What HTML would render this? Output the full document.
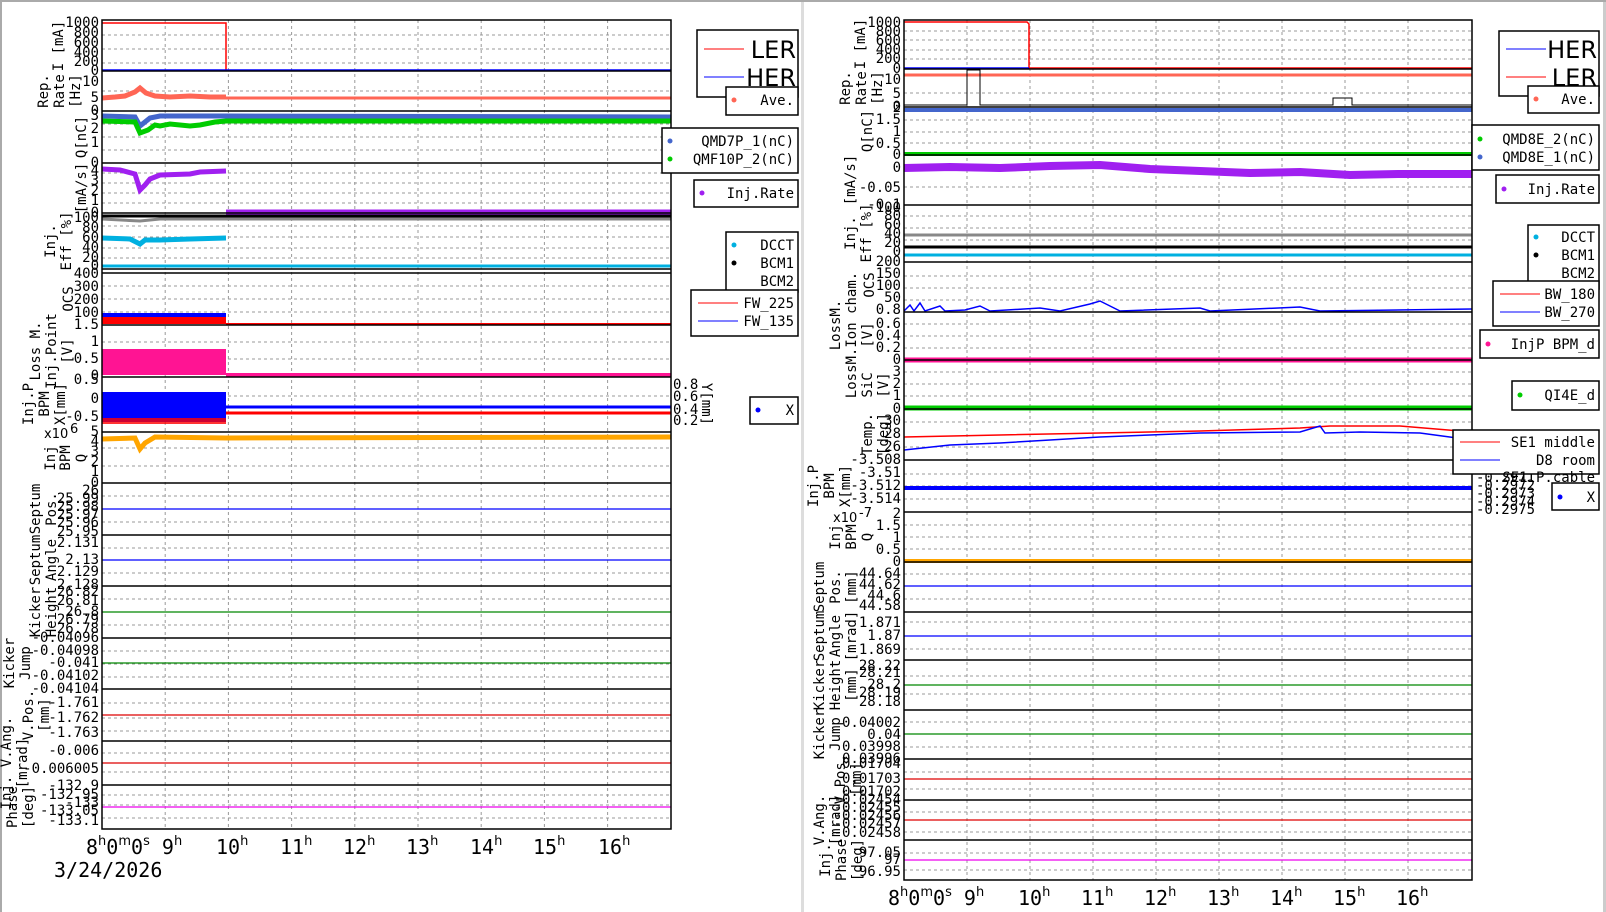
<!DOCTYPE html>
<html><head><meta charset="utf-8"><style>
html,body{margin:0;padding:0;background:#fff;width:1606px;height:912px;overflow:hidden}
svg{display:block}
text{font-family:"DejaVu Sans Mono","Liberation Mono",monospace;fill:#000}
.t{font-size:14px;text-anchor:end}
.a{font-size:14px;text-anchor:middle}
.h{font-family:"DejaVu Sans","Liberation Sans",sans-serif;font-size:20px}
.hs{font-family:"DejaVu Sans","Liberation Sans",sans-serif;font-size:13px}
.lg{font-size:14px;text-anchor:end}
.big{font-family:"DejaVu Sans","Liberation Sans",sans-serif;font-size:24px;text-anchor:end}
.g{stroke:#999;stroke-width:1;stroke-dasharray:3,3}
.b{stroke:#000;stroke-width:1.5;fill:none}
</style></head><body>
<svg width="1606" height="912" viewBox="0 0 1606 912" xmlns="http://www.w3.org/2000/svg">
<rect x="0" y="0" width="1606" height="2" fill="#aaa"/>
<rect x="0" y="0" width="2" height="912" fill="#aaa"/>
<rect x="801" y="2" width="3" height="910" fill="#ddd"/>
<rect x="1603" y="2" width="3" height="910" fill="#ccc"/>

<!-- ============ LEFT PLOT ============ -->
<g>
<!-- vertical grid -->
<g class="g">
<line x1="165.2" y1="20" x2="165.2" y2="829"/><line x1="228.4" y1="20" x2="228.4" y2="829"/><line x1="291.6" y1="20" x2="291.6" y2="829"/><line x1="354.8" y1="20" x2="354.8" y2="829"/><line x1="418" y1="20" x2="418" y2="829"/><line x1="481.2" y1="20" x2="481.2" y2="829"/><line x1="544.4" y1="20" x2="544.4" y2="829"/><line x1="607.6" y1="20" x2="607.6" y2="829"/>
</g>
<!-- horizontal grid -->
<g class="g">
<line x1="102" x2="671" y1="35" y2="35"/><line x1="102" x2="671" y1="49" y2="49"/><line x1="102" x2="671" y1="63" y2="63"/>
<line x1="102" x2="671" y1="91" y2="91"/>
<line x1="102" x2="671" y1="124" y2="124"/><line x1="102" x2="671" y1="137" y2="137"/><line x1="102" x2="671" y1="150" y2="150"/>
<line x1="102" x2="671" y1="173" y2="173"/><line x1="102" x2="671" y1="183" y2="183"/><line x1="102" x2="671" y1="193" y2="193"/><line x1="102" x2="671" y1="203" y2="203"/>
<line x1="102" x2="671" y1="226" y2="226"/><line x1="102" x2="671" y1="237" y2="237"/><line x1="102" x2="671" y1="248" y2="248"/><line x1="102" x2="671" y1="258" y2="258"/>
<line x1="102" x2="671" y1="286" y2="286"/><line x1="102" x2="671" y1="299" y2="299"/><line x1="102" x2="671" y1="312" y2="312"/>
<line x1="102" x2="671" y1="342" y2="342"/><line x1="102" x2="671" y1="359" y2="359"/>
<line x1="102" x2="671" y1="396" y2="396"/><line x1="102" x2="671" y1="414" y2="414"/>
<line x1="102" x2="671" y1="448" y2="448"/><line x1="102" x2="671" y1="466" y2="466"/>
<line x1="102" x2="671" y1="496" y2="496"/><line x1="102" x2="671" y1="509" y2="509"/><line x1="102" x2="671" y1="522" y2="522"/>
<line x1="102" x2="671" y1="548" y2="548"/><line x1="102" x2="671" y1="560" y2="560"/><line x1="102" x2="671" y1="573" y2="573"/>
<line x1="102" x2="671" y1="599" y2="599"/><line x1="102" x2="671" y1="612" y2="612"/><line x1="102" x2="671" y1="625" y2="625"/>
<line x1="102" x2="671" y1="651" y2="651"/><line x1="102" x2="671" y1="664" y2="664"/><line x1="102" x2="671" y1="677" y2="677"/>
<line x1="102" x2="671" y1="703" y2="703"/><line x1="102" x2="671" y1="718" y2="718"/><line x1="102" x2="671" y1="731" y2="731"/>
<line x1="102" x2="671" y1="753" y2="753"/><line x1="102" x2="671" y1="772" y2="772"/>
<line x1="102" x2="671" y1="795" y2="795"/><line x1="102" x2="671" y1="805" y2="805"/><line x1="102" x2="671" y1="818" y2="818"/>
</g>
<!-- data -->
<polyline points="102,23 226,23 226,71" fill="none" stroke="#f00" stroke-width="1.5"/>
<line x1="102" y1="70" x2="671" y2="70" stroke="#00f" stroke-width="1.5"/>
<!-- rep rate -->
<polyline points="102,98 115,97 125,96 135,92 140,88 146,93 155,96 170,97 190,96 210,97 226,97" fill="none" stroke="#f65" stroke-width="5"/>
<line x1="226" y1="98" x2="671" y2="98" stroke="#f65" stroke-width="3"/>
<!-- Q -->
<polyline points="102,116 135,117 140,126 150,118 160,116 226,116 671,117" fill="none" stroke="#4466cc" stroke-width="5"/>
<polyline points="102,121 135,122 140,133 148,130 155,125 160,126 170,124 190,126 200,125 215,122 226,121 671,121" fill="none" stroke="#0c0" stroke-width="5"/>
<!-- Inj rate -->
<polyline points="102,169 120,170 135,174 140,190 145,185 150,179 160,175 190,174 200,172 226,171" fill="none" stroke="#a020f0" stroke-width="5"/>
<line x1="226" y1="212" x2="671" y2="212" stroke="#a020f0" stroke-width="5"/>
<!-- Eff -->
<line x1="102" y1="216" x2="671" y2="216" stroke="#000" stroke-width="3"/>
<polyline points="102,219 140,221 160,219 226,219 671,219" fill="none" stroke="#888" stroke-width="3"/>
<polyline points="102,238 130,239 140,244 145,240 160,240 190,239 226,238" fill="none" stroke="#00b0e0" stroke-width="5"/>
<line x1="102" y1="266" x2="671" y2="266" stroke="#00b0e0" stroke-width="3"/>
<!-- OCS -->
<rect x="102" y="313" width="124" height="4" fill="#00f"/>
<rect x="102" y="317" width="124" height="7" fill="#f00"/>
<line x1="226" y1="324" x2="671" y2="324" stroke="#f00" stroke-width="2"/>
<line x1="226" y1="325" x2="671" y2="325" stroke="#00f" stroke-width="1"/>
<!-- Loss -->
<rect x="102" y="349" width="124" height="26" fill="#ff1493"/>
<line x1="226" y1="375" x2="671" y2="375" stroke="#ff1493" stroke-width="4"/>
<!-- BPM -->
<rect x="102" y="392" width="124" height="30" fill="#00f"/>
<rect x="102" y="418" width="124" height="6" fill="#f00" opacity=".8"/>
<line x1="226" y1="407" x2="671" y2="407" stroke="#00f" stroke-width="3"/>
<line x1="226" y1="413" x2="671" y2="413" stroke="#f00" stroke-width="3"/>
<!-- Q BPM -->
<polyline points="102,439 135,438 140,449 145,443 155,437 226,438 671,437" fill="none" stroke="#ffa500" stroke-width="5"/>
<line x1="102" y1="509" x2="671" y2="509" stroke="#00f" stroke-width="1.2"/>
<line x1="102" y1="560" x2="671" y2="560" stroke="#00f" stroke-width="1.2"/>
<line x1="102" y1="612" x2="671" y2="612" stroke="#080" stroke-width="1.2"/>
<line x1="102" y1="663" x2="671" y2="663" stroke="#080" stroke-width="1.2"/>
<line x1="102" y1="715" x2="671" y2="715" stroke="#d00" stroke-width="1.2"/>
<line x1="102" y1="763" x2="671" y2="763" stroke="#d00" stroke-width="1.2"/>
<line x1="102" y1="807" x2="671" y2="807" stroke="#e0e" stroke-width="1.2"/>
<!-- frames -->
<g class="b">
<rect x="102" y="20" width="569" height="809"/>
<line x1="102" x2="671" y1="71" y2="71"/><line x1="102" x2="671" y1="111" y2="111"/><line x1="102" x2="671" y1="163" y2="163"/><line x1="102" x2="671" y1="213" y2="213"/><line x1="102" x2="671" y1="269" y2="269"/><line x1="102" x2="671" y1="273" y2="273"/><line x1="102" x2="671" y1="325" y2="325"/><line x1="102" x2="671" y1="377" y2="377"/><line x1="102" x2="671" y1="432" y2="432"/><line x1="102" x2="671" y1="483" y2="483"/><line x1="102" x2="671" y1="535" y2="535"/><line x1="102" x2="671" y1="586" y2="586"/><line x1="102" x2="671" y1="638" y2="638"/><line x1="102" x2="671" y1="689" y2="689"/><line x1="102" x2="671" y1="741" y2="741"/><line x1="102" x2="671" y1="785" y2="785"/>
</g>
<!-- tick labels -->
<g class="t">
<text x="99" y="27">1000</text><text x="99" y="37">800</text><text x="99" y="47">600</text><text x="99" y="57">400</text><text x="99" y="66">200</text><text x="99" y="75">0</text>
<text x="99" y="86">10</text><text x="99" y="102">5</text><text x="99" y="115">0</text>
<text x="99" y="120">3</text><text x="99" y="133">2</text><text x="99" y="147">1</text><text x="99" y="167">0</text>
<text x="99" y="175">4</text><text x="99" y="185">3</text><text x="99" y="195">2</text><text x="99" y="205">1</text><text x="99" y="217">0</text>
<text x="99" y="222">100</text><text x="99" y="232">80</text><text x="99" y="242">60</text><text x="99" y="252">40</text><text x="99" y="262">20</text><text x="99" y="270">0</text>
<text x="99" y="278">400</text><text x="99" y="291">300</text><text x="99" y="304">200</text><text x="99" y="317">100</text>
<text x="99" y="329">1.5</text><text x="99" y="346">1</text><text x="99" y="363">0.5</text><text x="99" y="380">0</text>
<text x="99" y="384">0.5</text><text x="99" y="403">0</text><text x="99" y="421">-0.5</text>
<text x="99" y="436">5</text><text x="99" y="446">4</text><text x="99" y="456">3</text><text x="99" y="466">2</text><text x="99" y="476">1</text><text x="99" y="487">0</text>
<text x="99" y="495">26</text><text x="99" y="503">25.99</text><text x="99" y="511">25.98</text><text x="99" y="519">25.97</text><text x="99" y="527">25.96</text><text x="99" y="536">25.95</text>
<text x="99" y="547">2.131</text><text x="99" y="564">2.13</text><text x="99" y="576">2.129</text><text x="99" y="589">2.128</text>
<text x="99" y="596">26.82</text><text x="99" y="605">26.81</text><text x="99" y="616">26.8</text><text x="99" y="624">26.79</text><text x="99" y="633">26.78</text>
<text x="99" y="642">-0.04096</text><text x="99" y="655">-0.04098</text><text x="99" y="667">-0.041</text><text x="99" y="680">-0.04102</text><text x="99" y="693">-0.04104</text>
<text x="99" y="707">-1.761</text><text x="99" y="722">-1.762</text><text x="99" y="737">-1.763</text>
<text x="99" y="755">-0.006</text><text x="99" y="773">-0.006005</text>
<text x="99" y="790">-132.9</text><text x="99" y="799">-132.95</text><text x="99" y="807">-133</text><text x="99" y="815">-133.05</text><text x="99" y="825">-133.1</text>
</g>
<text x="44" y="438" class="hs">x10</text><text x="70" y="433" class="hs" font-size="10">6</text>
<!-- axis titles -->
<g class="a">
<text transform="translate(63,46) rotate(-90)">I [mA]</text>
<text transform="translate(48,91) rotate(-90)">Rep.</text><text transform="translate(64,91) rotate(-90)">Rate</text><text transform="translate(80,91) rotate(-90)">[Hz]</text>
<text transform="translate(86,137) rotate(-90)">Q[nC]</text>
<text transform="translate(86,188) rotate(-90)">[mA/s]</text>
<text transform="translate(55,241) rotate(-90)">Inj.</text><text transform="translate(71,241) rotate(-90)">Eff [%]</text>
<text transform="translate(73,299) rotate(-90)">OCS</text>
<text transform="translate(40,351) rotate(-90)">Loss M.</text><text transform="translate(56,351) rotate(-90)">Inj.Point</text><text transform="translate(72,351) rotate(-90)">[V]</text>
<text transform="translate(33,404) rotate(-90)">Inj.P</text><text transform="translate(49,404) rotate(-90)">BPM</text><text transform="translate(65,404) rotate(-90)">X[mm]</text>
<text transform="translate(55,458) rotate(-90)">Inj</text><text transform="translate(70,458) rotate(-90)">BPM</text><text transform="translate(86,458) rotate(-90)">Q</text>
<text transform="translate(40,509) rotate(-90)">Septum</text><text transform="translate(56,509) rotate(-90)">Pos.</text>
<text transform="translate(40,560) rotate(-90)">Septum</text><text transform="translate(56,560) rotate(-90)">Angle</text>
<text transform="translate(40,612) rotate(-90)">Kicker</text><text transform="translate(56,612) rotate(-90)">Height</text>
<text transform="translate(14,663) rotate(-90)">Kicker</text><text transform="translate(30,663) rotate(-90)">Jump</text>
<text transform="translate(33,715) rotate(-90)">V.Pos.</text><text transform="translate(49,715) rotate(-90)">[mm]</text>
<text transform="translate(11,763) rotate(-90)">Inj. V.Ang.</text><text transform="translate(27,763) rotate(-90)">[mrad]</text>
<text transform="translate(17,807) rotate(-90)">Phase</text><text transform="translate(33,807) rotate(-90)">[deg]</text>
</g>
<!-- right Y for BPM -->
<g class="t" style="text-anchor:start"><text x="673" y="389">0.8</text><text x="673" y="401">0.6</text><text x="673" y="414">0.4</text><text x="673" y="425">0.2</text></g>
<text transform="translate(702,404) rotate(90)" class="a" font-size="13">Y[mm]</text>
<!-- x labels -->
<g class="h">
<text x="86" y="854">8<tspan class="hs" dy="-9">h</tspan><tspan dy="9">0</tspan><tspan class="hs" dy="-9">m</tspan><tspan dy="9">0</tspan><tspan class="hs" dy="-9">s</tspan><tspan dy="9"> 9</tspan><tspan class="hs" dy="-9">h</tspan></text>
<text x="216" y="854">10<tspan class="hs" dy="-9">h</tspan></text><text x="280" y="854">11<tspan class="hs" dy="-9">h</tspan></text><text x="343" y="854">12<tspan class="hs" dy="-9">h</tspan></text><text x="406" y="854">13<tspan class="hs" dy="-9">h</tspan></text><text x="470" y="854">14<tspan class="hs" dy="-9">h</tspan></text><text x="533" y="854">15<tspan class="hs" dy="-9">h</tspan></text><text x="598" y="854">16<tspan class="hs" dy="-9">h</tspan></text>
<text x="54" y="877">3/24/2026</text>
</g>
<!-- legends -->
<g fill="#fff" stroke="#000" stroke-width="1.5">
<rect x="697" y="30" width="101" height="67"/>
<rect x="726" y="87" width="72" height="28"/>
<rect x="662" y="128" width="136" height="45"/>
<rect x="694" y="180" width="104" height="27"/>
<rect x="726" y="232" width="72" height="60"/>
<rect x="691" y="290" width="107" height="46"/>
<rect x="750" y="397" width="48" height="27"/>
</g>
<line x1="704" y1="49" x2="744" y2="49" stroke="#f00"/><text x="796" y="58" class="big">LER</text>
<line x1="704" y1="77" x2="744" y2="77" stroke="#00f"/><text x="796" y="86" class="big">HER</text>
<circle cx="734" cy="100" r="2.5" fill="#f65"/><text x="794" y="105" class="lg">Ave.</text>
<circle cx="670" cy="141" r="2.5" fill="#4466cc"/><text x="794" y="146" class="lg">QMD7P_1(nC)</text>
<circle cx="670" cy="159" r="2.5" fill="#0c0"/><text x="794" y="164" class="lg">QMF10P_2(nC)</text>
<circle cx="702" cy="193" r="2.5" fill="#a020f0"/><text x="794" y="198" class="lg">Inj.Rate</text>
<circle cx="734" cy="245" r="2.5" fill="#00b0e0"/><text x="794" y="250" class="lg">DCCT</text>
<circle cx="734" cy="263" r="2.5" fill="#000"/><text x="794" y="268" class="lg">BCM1</text>
<text x="794" y="286" class="lg">BCM2</text>
<line x1="698" y1="303" x2="738" y2="303" stroke="#f00"/><text x="794" y="308" class="lg">FW_225</text>
<line x1="698" y1="321" x2="738" y2="321" stroke="#00f"/><text x="794" y="326" class="lg">FW_135</text>
<circle cx="758" cy="410" r="2.5" fill="#00f"/><text x="794" y="415" class="lg">X</text>
</g>

<!-- ============ RIGHT PLOT ============ -->
<g>
<g class="g">
<line x1="967" y1="20" x2="967" y2="880"/><line x1="1030" y1="20" x2="1030" y2="880"/><line x1="1093" y1="20" x2="1093" y2="880"/><line x1="1156" y1="20" x2="1156" y2="880"/><line x1="1219" y1="20" x2="1219" y2="880"/><line x1="1282" y1="20" x2="1282" y2="880"/><line x1="1345" y1="20" x2="1345" y2="880"/><line x1="1408" y1="20" x2="1408" y2="880"/>
</g>
<g class="g">
<line x1="904" x2="1472" y1="31" y2="31"/><line x1="904" x2="1472" y1="40" y2="40"/><line x1="904" x2="1472" y1="50" y2="50"/><line x1="904" x2="1472" y1="59" y2="59"/>
<line x1="904" x2="1472" y1="93" y2="93"/>
<line x1="904" x2="1472" y1="120" y2="120"/><line x1="904" x2="1472" y1="132" y2="132"/><line x1="904" x2="1472" y1="143" y2="143"/>
<line x1="904" x2="1472" y1="187" y2="187"/>
<line x1="904" x2="1472" y1="216" y2="216"/><line x1="904" x2="1472" y1="228" y2="228"/><line x1="904" x2="1472" y1="240" y2="240"/>
<line x1="904" x2="1472" y1="276" y2="276"/><line x1="904" x2="1472" y1="288" y2="288"/><line x1="904" x2="1472" y1="300" y2="300"/>
<line x1="904" x2="1472" y1="324" y2="324"/><line x1="904" x2="1472" y1="336" y2="336"/><line x1="904" x2="1472" y1="348" y2="348"/>
<line x1="904" x2="1472" y1="372" y2="372"/><line x1="904" x2="1472" y1="384" y2="384"/><line x1="904" x2="1472" y1="396" y2="396"/>
<line x1="904" x2="1472" y1="422" y2="422"/><line x1="904" x2="1472" y1="447" y2="447"/>
<line x1="904" x2="1472" y1="474" y2="474"/><line x1="904" x2="1472" y1="486" y2="486"/><line x1="904" x2="1472" y1="499" y2="499"/>
<line x1="904" x2="1472" y1="525" y2="525"/><line x1="904" x2="1472" y1="537" y2="537"/><line x1="904" x2="1472" y1="549" y2="549"/>
<line x1="904" x2="1472" y1="574" y2="574"/><line x1="904" x2="1472" y1="586" y2="586"/><line x1="904" x2="1472" y1="599" y2="599"/>
<line x1="904" x2="1472" y1="622" y2="622"/><line x1="904" x2="1472" y1="636" y2="636"/><line x1="904" x2="1472" y1="649" y2="649"/>
<line x1="904" x2="1472" y1="676" y2="676"/><line x1="904" x2="1472" y1="694" y2="694"/>
<line x1="904" x2="1472" y1="722" y2="722"/><line x1="904" x2="1472" y1="747" y2="747"/>
<line x1="904" x2="1472" y1="772" y2="772"/><line x1="904" x2="1472" y1="789" y2="789"/>
<line x1="904" x2="1472" y1="812" y2="812"/><line x1="904" x2="1472" y1="832" y2="832"/>
<line x1="904" x2="1472" y1="853" y2="853"/><line x1="904" x2="1472" y1="870" y2="870"/>
</g>
<!-- data -->
<polyline points="904,22 1027,22 1029,24 1029,68 1472,68" fill="none" stroke="#f00" stroke-width="1.5"/>
<line x1="904" y1="68" x2="1029" y2="68" stroke="#00f" stroke-width="1.5"/>
<line x1="904" y1="75" x2="1472" y2="75" stroke="#f65" stroke-width="3"/>
<polyline points="904,105 967,105 967,70 980,70 980,105 1333,105 1333,98 1352,98 1352,105 1472,105" fill="none" stroke="#000" stroke-width="1"/>
<line x1="904" y1="110" x2="1472" y2="110" stroke="#4466cc" stroke-width="4"/>
<line x1="904" y1="154" x2="1472" y2="154" stroke="#0c0" stroke-width="4"/>
<polyline points="904,168 950,167 1000,168 1050,166 1100,165 1150,169 1200,171 1250,173 1300,172 1350,175 1400,174 1472,174" fill="none" stroke="#a020f0" stroke-width="8"/>
<line x1="904" y1="235" x2="1472" y2="235" stroke="#888" stroke-width="3"/>
<line x1="904" y1="247" x2="1472" y2="247" stroke="#000" stroke-width="3"/>
<line x1="904" y1="255" x2="1472" y2="255" stroke="#00b0e0" stroke-width="3"/>
<polyline points="904,311 910,305 914,311 920,303 925,311 940,306 945,311 965,310 980,306 990,311 1040,308 1060,311 1090,304 1100,301 1110,306 1120,311 1200,308 1210,311 1300,307 1320,311 1472,309" fill="none" stroke="#00f" stroke-width="1.5"/>
<line x1="904" y1="360" x2="1472" y2="360" stroke="#ff1493" stroke-width="5"/>
<line x1="904" y1="408" x2="1472" y2="408" stroke="#0c0" stroke-width="5"/>
<polyline points="904,437 1000,435 1100,433 1200,431 1300,428 1330,426 1400,426 1472,432" fill="none" stroke="#f00" stroke-width="1.5"/>
<polyline points="904,450 950,445 1000,443 1050,440 1100,437 1150,435 1200,433 1300,432 1320,426 1325,433 1360,432 1420,433 1472,440" fill="none" stroke="#00f" stroke-width="1.5"/>
<line x1="904" y1="488" x2="1472" y2="488" stroke="#00f" stroke-width="4"/>
<line x1="904" y1="561" x2="1472" y2="561" stroke="#ffa500" stroke-width="4"/>
<line x1="904" y1="586" x2="1472" y2="586" stroke="#00f" stroke-width="1.2"/>
<line x1="904" y1="636" x2="1472" y2="636" stroke="#00f" stroke-width="1.2"/>
<line x1="904" y1="685" x2="1472" y2="685" stroke="#080" stroke-width="1.2"/>
<line x1="904" y1="734" x2="1472" y2="734" stroke="#080" stroke-width="1.2"/>
<line x1="904" y1="779" x2="1472" y2="779" stroke="#d00" stroke-width="1.2"/>
<line x1="904" y1="820" x2="1472" y2="820" stroke="#d00" stroke-width="1.2"/>
<line x1="904" y1="860" x2="1472" y2="860" stroke="#e0e" stroke-width="1.2"/>
<g class="b">
<rect x="904" y="20" width="568" height="860"/>
<line x1="904" x2="1472" y1="69" y2="69"/><line x1="904" x2="1472" y1="107" y2="107"/><line x1="904" x2="1472" y1="155" y2="155"/><line x1="904" x2="1472" y1="205" y2="205"/><line x1="904" x2="1472" y1="262" y2="262"/><line x1="904" x2="1472" y1="312" y2="312"/><line x1="904" x2="1472" y1="360" y2="360"/><line x1="904" x2="1472" y1="409" y2="409"/><line x1="904" x2="1472" y1="460" y2="460"/><line x1="904" x2="1472" y1="512" y2="512"/><line x1="904" x2="1472" y1="562" y2="562"/><line x1="904" x2="1472" y1="612" y2="612"/><line x1="904" x2="1472" y1="660" y2="660"/><line x1="904" x2="1472" y1="710" y2="710"/><line x1="904" x2="1472" y1="759" y2="759"/><line x1="904" x2="1472" y1="800" y2="800"/><line x1="904" x2="1472" y1="840" y2="840"/>
</g>
<g class="t">
<text x="901" y="27">1000</text><text x="901" y="36">800</text><text x="901" y="45">600</text><text x="901" y="54">400</text><text x="901" y="63">200</text><text x="901" y="73">0</text>
<text x="901" y="84">10</text><text x="901" y="98">5</text><text x="901" y="111">0</text>
<text x="901" y="112">2</text><text x="901" y="124">1.5</text><text x="901" y="136">1</text><text x="901" y="148">0.5</text><text x="901" y="159">0</text>
<text x="901" y="172">0</text><text x="901" y="192">-0.05</text><text x="901" y="209">-0.1</text>
<text x="901" y="212">100</text><text x="901" y="220">80</text><text x="901" y="229">60</text><text x="901" y="238">40</text><text x="901" y="247">20</text><text x="901" y="256">0</text>
<text x="901" y="266">200</text><text x="901" y="278">150</text><text x="901" y="290">100</text><text x="901" y="302">50</text><text x="901" y="314">0.8</text>
<text x="901" y="328">0.6</text><text x="901" y="340">0.4</text><text x="901" y="352">0.2</text><text x="901" y="364">0</text>
<text x="901" y="376">3</text><text x="901" y="388">2</text><text x="901" y="400">1</text><text x="901" y="413">0</text>
<text x="901" y="425">30</text><text x="901" y="438">28</text><text x="901" y="451">26</text>
<text x="901" y="464">-3.508</text><text x="901" y="477">-3.51</text><text x="901" y="490">-3.512</text><text x="901" y="503">-3.514</text>
<text x="901" y="518">2</text><text x="901" y="530">1.5</text><text x="901" y="542">1</text><text x="901" y="554">0.5</text><text x="901" y="566">0</text>
<text x="901" y="578">44.64</text><text x="901" y="589">44.62</text><text x="901" y="600">44.6</text><text x="901" y="610">44.58</text>
<text x="901" y="627">1.871</text><text x="901" y="640">1.87</text><text x="901" y="654">1.869</text>
<text x="901" y="670">28.22</text><text x="901" y="677">28.21</text><text x="901" y="689">28.2</text><text x="901" y="697">28.19</text><text x="901" y="706">28.18</text>
<text x="901" y="727">0.04002</text><text x="901" y="739">0.04</text><text x="901" y="751">0.03998</text><text x="901" y="763">0.03996</text>
<text x="901" y="768">0.01704</text><text x="901" y="783">0.01703</text><text x="901" y="796">0.01702</text>
<text x="901" y="804">-0.02454</text><text x="901" y="812">-0.02455</text><text x="901" y="820">-0.02456</text><text x="901" y="828">-0.02457</text><text x="901" y="837">-0.02458</text>
<text x="901" y="857">97.05</text><text x="901" y="864">97</text><text x="901" y="876">96.95</text>
</g>
<text x="833" y="522" class="hs">x10</text><text x="859" y="517" class="hs" font-size="10">-7</text>
<g class="a">
<text transform="translate(865,44) rotate(-90)">I [mA]</text>
<text transform="translate(850,88) rotate(-90)">Rep.</text><text transform="translate(866,88) rotate(-90)">Rate</text><text transform="translate(882,88) rotate(-90)">[Hz]</text>
<text transform="translate(872,131) rotate(-90)">Q[nC]</text>
<text transform="translate(855,180) rotate(-90)">[mA/s]</text>
<text transform="translate(855,233) rotate(-90)">Inj.</text><text transform="translate(871,233) rotate(-90)">Eff [%]</text>
<text transform="translate(874,285) rotate(-90)">OCS</text>
<text transform="translate(840,325) rotate(-90)">LossM.</text><text transform="translate(856,335) rotate(-90)">LossM.Ion cham.</text><text transform="translate(872,335) rotate(-90)">[V]</text>
<text transform="translate(872,385) rotate(-90)">SiC</text><text transform="translate(888,385) rotate(-90)">[V]</text>
<text transform="translate(872,434) rotate(-90)">Temp.</text><text transform="translate(888,434) rotate(-90)">[deg]</text>
<text transform="translate(818,486) rotate(-90)">Inj.P</text><text transform="translate(834,486) rotate(-90)">BPM</text><text transform="translate(850,486) rotate(-90)">X[mm]</text>
<text transform="translate(840,537) rotate(-90)">Inj</text><text transform="translate(856,537) rotate(-90)">BPM</text><text transform="translate(872,537) rotate(-90)">Q</text>
<text transform="translate(824,587) rotate(-90)">Septum</text><text transform="translate(840,587) rotate(-90)">Pos.</text><text transform="translate(856,587) rotate(-90)">[mm]</text>
<text transform="translate(824,636) rotate(-90)">Septum</text><text transform="translate(840,636) rotate(-90)">Angle</text><text transform="translate(856,636) rotate(-90)">[mrad]</text>
<text transform="translate(824,685) rotate(-90)">Kicker</text><text transform="translate(840,685) rotate(-90)">Height</text><text transform="translate(856,685) rotate(-90)">[mm]</text>
<text transform="translate(824,734) rotate(-90)">Kicker</text><text transform="translate(840,734) rotate(-90)">Jump</text>
<text transform="translate(845,779) rotate(-90)">V.Pos.</text><text transform="translate(861,779) rotate(-90)">[mm]</text>
<text transform="translate(824,820) rotate(-90)">V.Ang.</text><text transform="translate(840,820) rotate(-90)">[mrad]</text>
<text transform="translate(830,860) rotate(-90)">Inj.</text><text transform="translate(846,860) rotate(-90)">Phase</text><text transform="translate(862,860) rotate(-90)">[deg]</text>
</g>
<g class="t" style="text-anchor:start" font-size="13">
<text x="1476" y="474">-0.297</text><text x="1476" y="482">-0.2971</text><text x="1476" y="490">-0.2972</text><text x="1476" y="498">-0.2973</text><text x="1476" y="506">-0.2974</text><text x="1476" y="514">-0.2975</text>
</g>
<g class="h">
<text x="888" y="905">8<tspan class="hs" dy="-9">h</tspan><tspan dy="9">0</tspan><tspan class="hs" dy="-9">m</tspan><tspan dy="9">0</tspan><tspan class="hs" dy="-9">s</tspan><tspan dy="9"> 9</tspan><tspan class="hs" dy="-9">h</tspan></text>
<text x="1018" y="905">10<tspan class="hs" dy="-9">h</tspan></text><text x="1081" y="905">11<tspan class="hs" dy="-9">h</tspan></text><text x="1144" y="905">12<tspan class="hs" dy="-9">h</tspan></text><text x="1207" y="905">13<tspan class="hs" dy="-9">h</tspan></text><text x="1270" y="905">14<tspan class="hs" dy="-9">h</tspan></text><text x="1333" y="905">15<tspan class="hs" dy="-9">h</tspan></text><text x="1396" y="905">16<tspan class="hs" dy="-9">h</tspan></text>
</g>
<g fill="#fff" stroke="#000" stroke-width="1.5">
<rect x="1499" y="31" width="100" height="65"/>
<rect x="1528" y="86" width="71" height="27"/>
<rect x="1472" y="125" width="127" height="45"/>
<rect x="1496" y="175" width="103" height="28"/>
<rect x="1528" y="225" width="71" height="64"/>
<rect x="1493" y="281" width="106" height="45"/>
<rect x="1480" y="330" width="119" height="28"/>
<rect x="1512" y="381" width="87" height="29"/>
<rect x="1453" y="430" width="146" height="44"/>
<rect x="1552" y="483" width="47" height="27"/>
</g>
<line x1="1506" y1="49" x2="1546" y2="49" stroke="#00f"/><text x="1597" y="58" class="big">HER</text>
<line x1="1506" y1="77" x2="1546" y2="77" stroke="#f00"/><text x="1597" y="86" class="big">LER</text>
<circle cx="1536" cy="99" r="2.5" fill="#f65"/><text x="1595" y="104" class="lg">Ave.</text>
<circle cx="1480" cy="139" r="2.5" fill="#0c0"/><text x="1595" y="144" class="lg">QMD8E_2(nC)</text>
<circle cx="1480" cy="157" r="2.5" fill="#4466cc"/><text x="1595" y="162" class="lg">QMD8E_1(nC)</text>
<circle cx="1504" cy="189" r="2.5" fill="#a020f0"/><text x="1595" y="194" class="lg">Inj.Rate</text>
<circle cx="1536" cy="237" r="2.5" fill="#00b0e0"/><text x="1595" y="242" class="lg">DCCT</text>
<circle cx="1536" cy="255" r="2.5" fill="#000"/><text x="1595" y="260" class="lg">BCM1</text>
<text x="1595" y="278" class="lg">BCM2</text>
<line x1="1500" y1="294" x2="1540" y2="294" stroke="#f00"/><text x="1595" y="299" class="lg">BW_180</text>
<line x1="1500" y1="312" x2="1540" y2="312" stroke="#00f"/><text x="1595" y="317" class="lg">BW_270</text>
<circle cx="1488" cy="344" r="2.5" fill="#ff1493"/><text x="1595" y="349" class="lg">InjP BPM_d</text>
<circle cx="1520" cy="395" r="2.5" fill="#0c0"/><text x="1595" y="400" class="lg">QI4E_d</text>
<line x1="1460" y1="442" x2="1500" y2="442" stroke="#f00"/><text x="1595" y="447" class="lg">SE1 middle</text>
<line x1="1460" y1="460" x2="1500" y2="460" stroke="#00f"/><text x="1595" y="465" class="lg">D8 room</text>
<text x="1595" y="482" class="lg">SE1 P.cable</text>
<circle cx="1560" cy="497" r="2.5" fill="#00f"/><text x="1595" y="502" class="lg">X</text>
</g>
</svg>
</body></html>
